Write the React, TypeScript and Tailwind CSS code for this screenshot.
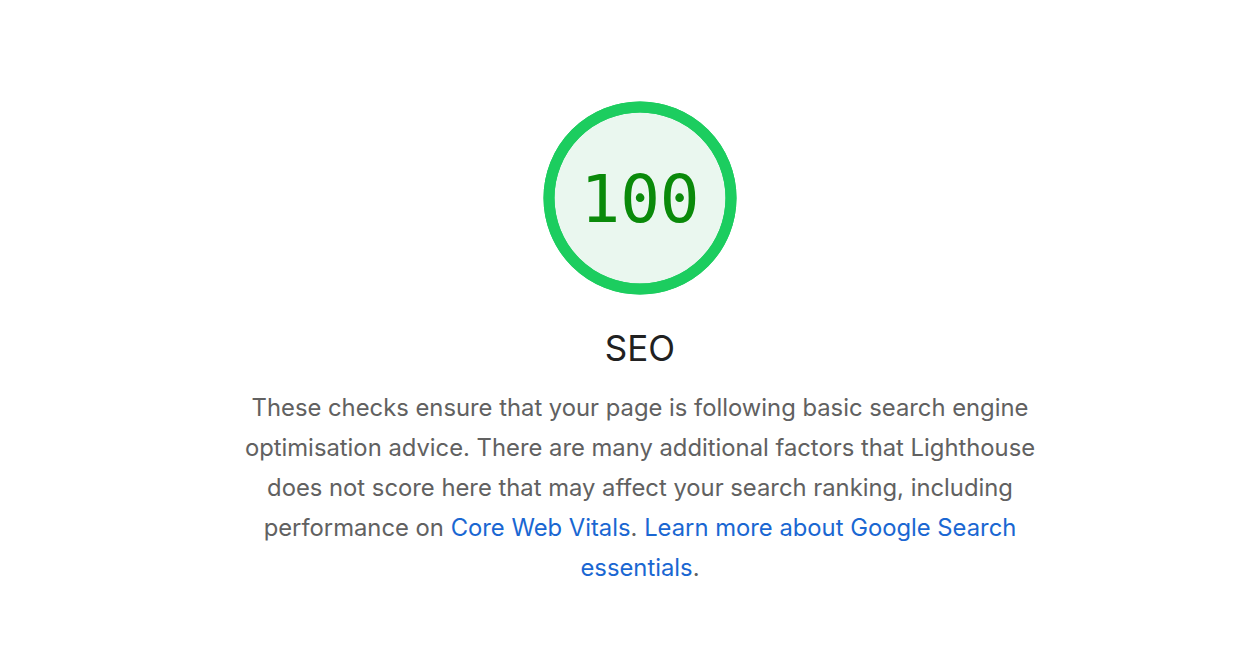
import React from 'react';

const score = 100;
const radius = 91;
const circumference = 2 * Math.PI * radius;

function Gauge({ value }: { value: number }) {
  return (
    <div className="relative w-[194px] h-[194px]">
      <svg viewBox="0 0 194 194" className="w-full h-full -rotate-90">
        <circle cx="97" cy="97" r={radius} fill="#eaf7ef" stroke="#1ccd5f" strokeWidth="11" />
        <circle
          cx="97"
          cy="97"
          r={radius}
          fill="none"
          stroke="#1ccd5f"
          strokeWidth="11"
          strokeDasharray={`${(value / 100) * circumference} ${circumference}`}
        />
      </svg>
      <div className="absolute inset-0 flex items-center justify-center pt-[4px]">
        <span className="text-[66px] leading-none text-[#0a8a0a] font-['DejaVu_Sans_Mono',monospace]">{value}</span>
      </div>
    </div>
  );
}

export default function App() {
  return (
    <div className="min-h-screen bg-white flex flex-col items-center pt-[101px] pl-[38px] font-['Inter','Liberation_Sans',sans-serif]">
      <Gauge value={score} />
      <h2 className="mt-[33px] text-[35px] leading-[40px] text-[#212121]">SEO</h2>
      <p className="mt-[20px] max-w-[820px] text-center text-[23.8px] leading-[40px] text-[#616161]">
        These checks ensure that your page is following basic search engine optimisation advice. There are many
        additional factors that Lighthouse does not score here that may affect your search ranking, including
        performance on{' '}
        <a href="#" className="text-[#1a67d2]">Core Web Vitals</a>.{' '}
        <a href="#" className="text-[#1a67d2]">Learn more about Google Search essentials</a>.
      </p>
    </div>
  );
}
